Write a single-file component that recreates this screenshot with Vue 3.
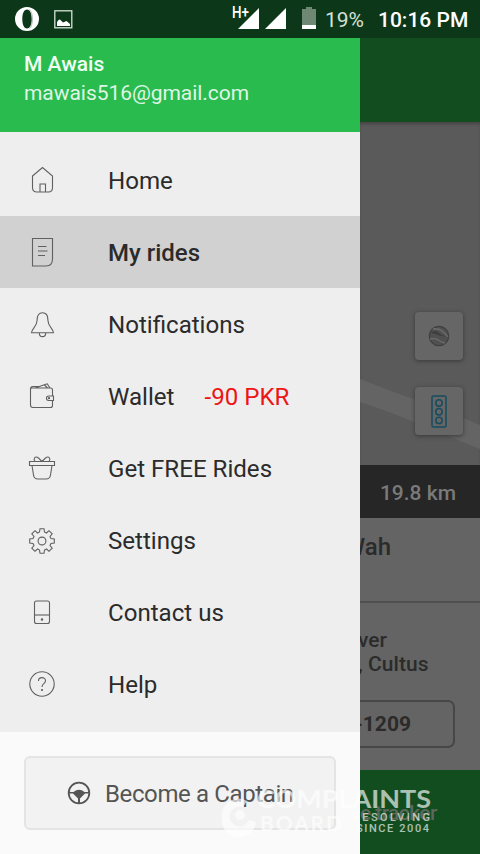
<script setup>
const items = [
  { id: 'home', label: 'Home' },
  { id: 'rides', label: 'My rides', active: true },
  { id: 'bell', label: 'Notifications' },
  { id: 'wallet', label: 'Wallet', amount: '-90 PKR' },
  { id: 'gift', label: 'Get FREE Rides' },
  { id: 'gear', label: 'Settings' },
  { id: 'phone', label: 'Contact us' },
  { id: 'help', label: 'Help' }
]
</script>

<template>
  <div class="screen">
    <header class="status">
      <svg class="opera" width="24" height="24" viewBox="0 0 24 24"><path fill="#fff" fill-rule="evenodd" d="M12 0a12 12 0 1 0 0 24a12 12 0 1 0 0-24zM12 2.500c3 0 4.700 4 4.700 9.500s-1.700 9.500-4.700 9.500s-4.700-4-4.700-9.500s1.700-9.500 4.700-9.500z"/><path d="M14.500 2.500c4 4 4 15 0 19" fill="none" stroke="#7e967f" stroke-width=".6"/></svg>
      <svg class="picture" width="19" height="19" viewBox="0 0 19 19"><rect x=".8" y=".8" width="17" height="17" fill="none" stroke="#d5e3d7" stroke-width="1.300"/><path fill="#fff" d="M3 16v-4l1.500-2 1.500-.5 3 3 3.500-1.500 3.500 3v2z"/></svg>
      <svg class="signal" width="55" height="26" viewBox="0 0 55 26"><path fill="#fff" d="M27 3v21H6zM54 3v21H33z"/><text x="0" y="13" class="hplus" stroke="#0c3718" stroke-width="2" paint-order="stroke" textLength="17" lengthAdjust="spacingAndGlyphs">H+</text></svg>
      <svg class="battery" width="14" height="22" viewBox="0 0 14 22"><path fill="#6e8873" d="M4 0h6v2h4v16H0V2h4z"/><path fill="#fff" d="M0 18h14v4H0z"/></svg>
      <span class="percent">19%</span>
      <span class="clock">10:16 PM</span>
    </header>

    <div class="body">
      <aside class="drawer">
        <div class="profile">
          <div class="name">M Awais</div>
          <div class="email">mawais516@gmail.com</div>
        </div>
        <nav class="menu">
          <div v-for="item in items" :key="item.id" class="item" :class="{ active: item.active }">
            <svg class="icon" width="28" height="28" viewBox="0 0 28 28">
              <g v-if="item.id === 'home'"><path d="M4.500 9L14.500 .5L24.500 9V20.500Q24.500 25 20.500 25H9Q4.500 25 4.500 20.500z"/><path d="M12 25V17h5.500v8"/></g>
              <g v-else-if="item.id === 'rides'"><path d="M4.500 -.5H24.500V20Q24.500 27 18 27H4.500z"/><path d="M10 7.500h8.500M10 12h9.500M10 16.500h7"/></g>
              <g v-else-if="item.id === 'bell'" transform="translate(0 1.300)"><path d="M14.500 .5C9.800 .5 9 4.500 9 8.500C9 14 4 16 3.500 20.500H25.500C25 16 20 14 20 8.500C20 4.500 19.200 .5 14.500 .5zM11.300 21c0 4.500 6.400 4.500 6.400 0"/></g>
              <g v-else-if="item.id === 'wallet'"><path d="M24.500 13.500V7Q24.500 5 22.500 5H4Q2.500 5 2.500 6.500V22Q2.500 24.500 5 24.500H22.500Q24.500 24.500 24.500 22.500V17.500M2.500 6Q2.500 3.500 5 3.500H11M7 5L18.500 1Q19.500 .5 20 2L22 5M16.500 2L19.500 5M25.500 13H20.500Q18.500 13 18.500 15.200T20.500 17.500H25.500z"/><circle cx="21" cy="15.200" r=".6"/></g>
              <g v-else-if="item.id === 'gift'" transform="translate(0 1.500)"><path d="M1.500 5H26.500V9H1.500zM4 9L5.500 18.500Q6 22.500 10 22.500H18Q22 22.500 22.500 18.500L24 9M14 5L17.500 1.500Q20-.5 21.500 1.500Q22.500 3 21 5M14 5L10.500 1.500Q8-.5 6.500 1.500Q5.500 3 7 5"/></g>
              <g v-else-if="item.id === 'gear'" transform="translate(14 14)"><path d="M-2-12.300H2L2.500-9L4.500-8L7-10.300L10.200-7.200L8-4.500L9-2.500L12.300-2V2L9 2.500L8 4.500L10.200 7.200L7 10.300L4.500 8L2.500 9L2 12.300H-2L-2.500 9L-4.500 8L-7 10.300L-10.200 7.200L-8 4.500L-9 2.500L-12.300 2V-2L-9-2.500L-8-4.500L-10.200-7.200L-7-10.300L-4.500-8L-2.500-9z"/><circle r="3.900"/></g>
              <g v-else-if="item.id === 'phone'" transform="translate(0 .5)"><rect x="6.500" y="1.500" width="15" height="22.500" rx="2"/><path d="M6.500 15.500h15"/><circle cx="14" cy="20" r=".7" class="solid"/></g>
              <g v-else><circle cx="14" cy="13" r="12.200"/><path d="M10.500 10C10.500 5.500 17.500 5.500 17.500 9.800C17.500 13 14 12.300 14 16"/><circle cx="14" cy="19" r=".5" class="solid"/></g>
            </svg>
            <span class="label">{{ item.label }}</span>
            <span v-if="item.amount" class="amount">{{ item.amount }}</span>
          </div>
        </nav>
        <div class="foot">
          <button class="captain">
            <svg width="24" height="24" viewBox="0 0 24 24"><circle cx="12" cy="12" r="10.300" fill="none" stroke="#555" stroke-width="1.800"/><path fill="#555" d="M2 11H6.500Q12 6.500 17.500 11H22V12.500H18L13 17.500V22H11V17.500L6 12.500H2z"/></svg>
            <span>Become a Captain</span>
          </button>
        </div>
      </aside>

      <main class="ride">
        <div class="appbar"></div>
        <section class="map">
          <svg class="road" width="120" height="343" viewBox="0 0 120 343"><path fill="#646464" d="M0 257C35 271 80 286 120 303V327C80 311 40 293 0 280z"/></svg>
          <div class="tool">
            <svg width="22" height="22" viewBox="0 0 22 22"><circle cx="11" cy="11" r="9.700" fill="#505050" stroke="#404040" stroke-width="1.300"/><path d="M3 8Q7 4 11 8T19 11Q14 12 10 10T3 8z" fill="#3e3e3e"/><path d="M5 4Q10 3 14 6T20 12M2 14Q7 13 10 15T17 18" fill="none" stroke="#6d6d6d" stroke-width="1.300"/></svg>
          </div>
          <div class="tool">
            <svg width="16" height="33" viewBox="0 0 16 33"><g fill="none" stroke="#164c60" stroke-width="1.500"><rect x="1" y="1" width="14" height="31" rx="1.500"/><circle cx="8" cy="8" r="3.200"/><circle cx="8" cy="16.700" r="3.200"/><circle cx="8" cy="25.400" r="3.200"/></g></svg>
          </div>
        </section>
        <div class="distance">19.8 km</div>
        <div class="place">Wah</div>
        <section class="driver">
          <div class="line role">Driver</div>
          <div class="line">, Cultus</div>
          <div class="plate">-1209</div>
        </section>
        <div class="tracker">e tracker</div>
      </main>
    </div>

    <svg class="watermark" width="225" height="54" viewBox="0 0 225 54">
      <g class="mark"><path d="M4 36a17 17 0 0 1 25-18l-4 6a10 10 0 1 0 6 13l7 2A17 17 0 0 1 4 36z"/><circle cx="22" cy="32" r="5"/>
      <text x="39" y="25" font-size="24.500" textLength="174" lengthAdjust="spacingAndGlyphs">COMPLAINTS</text>
      <text x="42" y="48" font-size="21" textLength="82">BOARD</text>
      <g class="small"><text x="135" y="38" textLength="77">RESOLVING</text>
      <text x="138" y="48.500" textLength="73">SINCE 2004</text></g></g>
    </svg>
  </div>
</template>

<style>
body { background: #fafafa; }
</style>

<style scoped>
.screen { position: relative; width: 480px; height: 854px; overflow: hidden; font-family: Roboto, "Liberation Sans", sans-serif; color: #2b2b2b; }
.status { display: flex; box-sizing: border-box; height: 38px; padding-left: 15px; background: #0c3718; color: #fff; }
.opera { margin-top: 7px; }
.picture { margin: 10px 0 0 15px; }
.signal { margin: 5px 0 0 159px; overflow: visible; }
.hplus { font-size: 16px; font-weight: 500; fill: #fff; }
.battery { margin: 7px 0 0 15px; }
.percent { margin-left: 9px; font-size: 21px; line-height: 40px; color: #d5e0d7; width: 40px; }
.clock { margin-left: 13px; font-size: 21px; line-height: 40px; font-weight: 500; white-space: nowrap; }
.body { display: flex; height: 816px; }
.drawer { display: flex; flex-direction: column; width: 360px; flex: none; background: #eee; }
.profile { box-sizing: border-box; height: 94px; padding: 12px 24px; background: #2abb4f; color: #effff2; }
.name { font-size: 21px; line-height: 28px; font-weight: 500; }
.email { font-size: 21px; line-height: 30px; letter-spacing: -.05px; color: #dff6e4; }
.menu { box-sizing: border-box; padding-top: 12px; height: 600px; }
.item { display: flex; align-items: center; height: 72px; padding-left: 28px; font-size: 24.1px; }
.active { background: #d1d1d1; font-weight: 500; font-size: 24px; }
.icon { width: 28px; height: 28px; margin-top: 2px; overflow: visible; fill: none; stroke: #606060; stroke-width: 1.100; }
.solid { fill: #555; }
.label { margin-left: 52px; line-height: 32px; padding-top: 2px; }
.amount { margin-left: 30px; padding-top: 2px; color: #ed1515; }
.foot { box-sizing: border-box; height: 122px; padding: 24px; background: #fafafa; }
.captain { display: flex; align-items: center; gap: 14px; box-sizing: border-box; width: 312px; height: 74px; padding: 2px 0 0 41px; border: 2px solid #e3e4e4; border-radius: 6px; background: #f2f2f2; color: #555; font: 24px Roboto, sans-serif; letter-spacing: -.38px; white-space: nowrap; }
.captain svg { margin-top: -3px; }
.ride { display: flex; flex-direction: column; width: 120px; overflow: hidden; background: #646464; font-weight: 500; }
.appbar { height: 84px; flex: none; background: #114d1f; }
.map { position: relative; display: flex; flex-direction: column; align-items: flex-end; gap: 27px; box-sizing: border-box; height: 343px; flex: none; padding: 190px 17px 0 0; background: #5a5a5a; box-shadow: inset 0 3px 3px -1px #454545; }
.road { position: absolute; left: 0; top: 0; }
.tool { position: relative; display: flex; align-items: center; justify-content: center; width: 48px; height: 48px; border-radius: 4px; background: #666; box-shadow: 0 1px 4px #383838; }
.distance { height: 53px; flex: none; box-sizing: border-box; padding-right: 24px; background: #262626; color: #7a7a7a; font-size: 21px; line-height: 56px; text-align: right; }
.place { display: flex; justify-content: flex-end; box-sizing: border-box; height: 85px; flex: none; padding: 13px 89px 0 0; border-bottom: 2px solid #505050; font-size: 24px; line-height: 32px; }
.driver { height: 167px; flex: none; box-sizing: border-box; padding-top: 25px; overflow: hidden; }
.line { font-size: 21px; line-height: 24px; letter-spacing: .05px; white-space: nowrap; margin-left: -2px; }
.role { display: flex; justify-content: flex-end; width: 29px; }
.plate { box-sizing: border-box; width: 115px; height: 48px; margin: 24px 0 0 -20px; padding-right: 42px; border: 2px solid #474747; border-radius: 7px; font-size: 21px; line-height: 45px; text-align: right; font-weight: 700; }
.tracker { flex: 1; background: #114d1f; padding-top: 27px; font-size: 21px; line-height: 32px; letter-spacing: -.6px; color: #5c685c; white-space: nowrap; font-weight: 500; }
.watermark { position: absolute; left: 218px; top: 783px; }
.mark { fill: #fff; opacity: .65; font-family: Lato, sans-serif; font-weight: 700; }
.small { font-family: Roboto, sans-serif; font-size: 11px; font-weight: 500; }
</style>
